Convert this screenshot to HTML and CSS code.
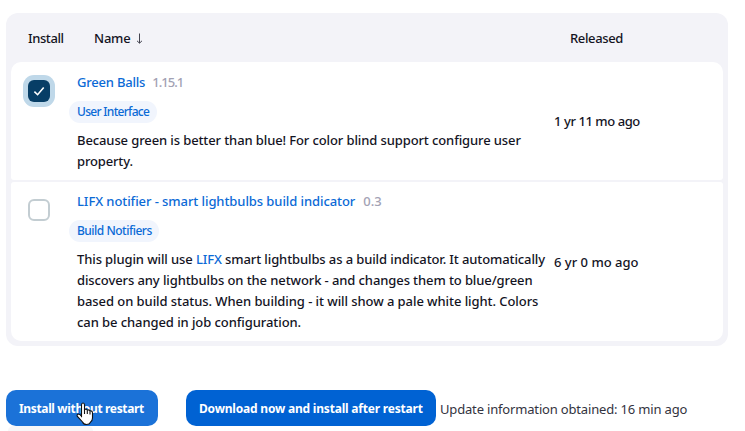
FILE: index.html
```
<!DOCTYPE html>
<html lang="en">
<head>
<meta charset="utf-8">
<title>Plugin Manager</title>
<link rel="stylesheet" href="styles.css">
</head>
<body>
<main>
  <section class="plugins">
    <header class="head">
      <span class="h-install">Install</span>
      <span class="h-name">Name</span>
      <svg class="sort" viewBox="0 0 7 11" width="7" height="11"><path d="M3.5 0.5V10M1 7.8L3.5 10.2L6 7.8"/></svg>
      <span class="h-released">Released</span>
    </header>
    <article class="row first">
      <div class="check-cell"><span class="box checked"><svg viewBox="0 0 22 22" width="22" height="22"><path d="M6.4 11.6L9.6 14.7L15.7 7.6"/></svg></span></div>
      <div class="info">
        <div class="title"><a class="t-green">Green Balls</a><span class="version v-green">1.15.1</span></div>
        <a class="tag tag-ui">User Interface</a>
        <p><span class="g1">Because green is better than blue! For color blind support configure user</span><br><span class="g2">property.</span></p>
      </div>
      <div class="released r1">1 yr 11 mo ago</div>
    </article>
    <article class="row second">
      <div class="check-cell"><span class="box"></span></div>
      <div class="info">
        <div class="title"><a class="t-lifx">LIFX notifier - smart lightbulbs build indicator</a><span class="version v-lifx">0.3</span></div>
        <a class="tag tag-bn">Build Notifiers</a>
        <p><span class="l1">This plugin will use <a>LIFX</a> smart lightbulbs as a build indicator. It automatically</span><br><span class="l2">discovers any lightbulbs on the network - and changes them to blue/green</span><br><span class="l3">based on build status. When building - it will show a pale white light. Colors</span><br><span class="l4">can be changed in job configuration.</span></p>
      </div>
      <div class="released r2">6 yr 0 mo ago</div>
    </article>
  </section>
  <footer class="actions">
    <button class="hover"><span class="b1">Install without restart</span></button>
    <button class="later"><span class="b2">Download now and install after restart</span></button>
    <span class="update">Update information obtained: 16 min ago</span>
  </footer>
  <div class="below"></div>
</main>
<svg class="cursor" viewBox="0 0 18 24" width="18" height="24"><path d="M5.5 15.2V3Q5.5 1 7 1Q8.5 1 8.5 3V7.5Q10.8 6.5 11.3 8.2Q13.2 7.4 14 9Q16.5 8.5 16.5 11V16Q16.5 18.5 14.5 20.2Q13.5 22.5 10.5 22.5Q7.5 22.5 6.5 20L1.2 14.2Q.7 12.3 2.3 12Q3.7 12 5.5 14.2"/><path d="M8.5 7.5V12M11.3 8.4V12M14 9.2V12.5"/></svg>
</body>
</html>
```
FILE: styles.css
```
* { box-sizing: border-box; }
body {
  margin: 0;
  background: #fff;
  color: #14141f;
  font: 500 13px/21px "Noto Sans", "Open Sans", sans-serif;
  overflow: hidden;
}
main { padding: 13px 17px 0 6px; }
a { color: #0b6ad6; }
.plugins {
  width: 722px;
  height: 333px;
  padding: 0 5px 5px;
  border-radius: 12px;
  background: #f3f3f8;
}
.head { display: flex; align-items: center; height: 49px; padding: 2px 0 0 17px; }
.h-install { width: 66px; letter-spacing: -0.4px; }
.h-name { width: 42px; letter-spacing: -0.2px; }
.h-released { margin-left: 427px; letter-spacing: -0.37px; }
.sort, .box path { fill: none; }
.sort { stroke: #444450; stroke-width: 1; }
.row {
  display: grid;
  grid-template-columns: 66px 477px 1fr;
  background: #fff;
}
.first { height: 118px; padding-top: 10px; border-radius: 10px 10px 3px 3px; }
.second { height: 159px; margin-top: 2px; padding-top: 9px; border-radius: 3px 3px 10px 10px; }
.check-cell { padding: 8px 0 0 17px; }
.box {
  display: block;
  width: 22px;
  height: 22px;
  border: 2px solid #c3cdd2;
  border-radius: 6px;
}
.checked { border: 0; background: #073e66; box-shadow: 0 0 0 5px #bfd8e9; }
.checked svg { display: block; }
.checked path { stroke: #fff; stroke-width: 1.6; }
.title { height: 21px; white-space: nowrap; }
.version { margin-left: 7px; color: #a2a2b4; }
.t-green { letter-spacing: -0.2px; }
.v-green { letter-spacing: -0.95px; }
.t-lifx { letter-spacing: -0.08px; }
.v-lifx { margin-left: 8px; }
.tag {
  display: block;
  width: 88px;
  height: 22px;
  margin: 8px 0 7px -8px;
  padding-left: 8px;
  border-radius: 11px;
  background: #f1f5fd;
  font-size: 12px;
  line-height: 22px;
  letter-spacing: -0.7px;
  white-space: nowrap;
}
.tag-bn { width: 90px; letter-spacing: -0.5px; }
p { margin: 0; white-space: nowrap; }
.g1, .l1 { letter-spacing: -0.11px; }
.g2 { letter-spacing: -0.15px; }
.l2 { letter-spacing: -0.1px; }
.l3 { letter-spacing: -0.07px; }
.l4 { letter-spacing: -0.08px; }
.released { align-self: center; white-space: nowrap; }
.r1 { padding-bottom: 10px; letter-spacing: -0.43px; }
.r2 { padding-bottom: 8px; }
.actions { display: flex; align-items: center; margin-top: 44px; height: 36px; }
button {
  width: 152px;
  height: 36px;
  padding: 2px 0 0 13px;
  border: 0;
  border-radius: 10px;
  background: #1b72d8;
  color: #fff;
  font: 700 12px/20px "Noto Sans", "Open Sans", sans-serif;
  text-align: left;
  white-space: nowrap;
}
.b1 { letter-spacing: -0.35px; }
.b2 { letter-spacing: -0.2px; }
.later { width: 250px; margin-left: 28px; background: #0062d3; }
.update {
  margin-left: 4px;
  padding-top: 2px;
  font-weight: 400;
  letter-spacing: -0.17px;
  white-space: nowrap;
  color: #333340;
}
.below {
  width: 85px;
  height: 5px;
  margin-left: 2px;
  border-radius: 5px 5px 0 0;
  background: #f7f7f8;
}
.cursor {
  position: absolute;
  left: 76px;
  top: 402px;
  fill: #fff;
  stroke: #111;
  stroke-width: 1.1;
}
```
